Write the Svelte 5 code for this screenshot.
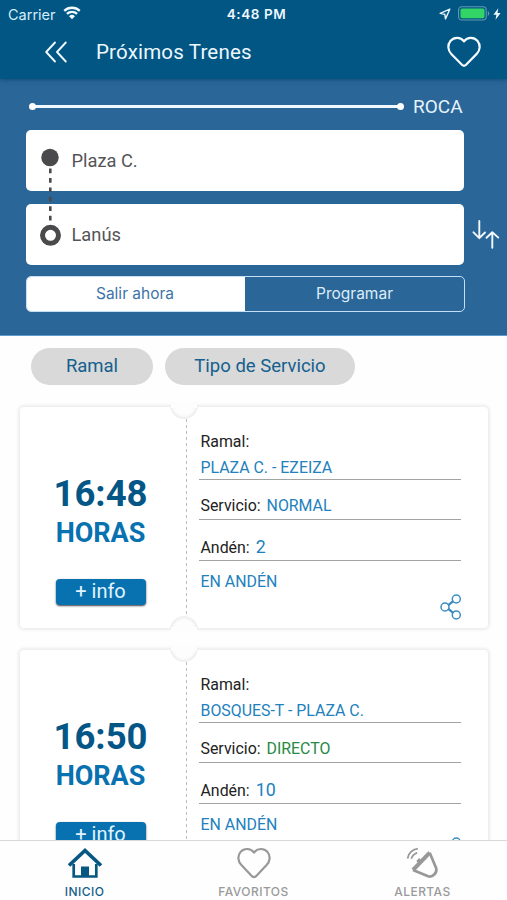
<script>
  const trains = [
    { time: '16:48', branch: 'PLAZA C. - EZEIZA', service: 'NORMAL', platform: '2', status: 'EN ANDÉN' },
    { time: '16:50', branch: 'BOSQUES-T - PLAZA C.', service: 'DIRECTO', platform: '10', status: 'EN ANDÉN' }
  ];
</script>

<div class="screen">
  <header>
    <div class="status">
      <div class="carrier">
        <span>Carrier</span>
        <svg width="18" height="14" viewBox="0 0 18 14" fill="none" stroke="#f0faff" stroke-width="2.3">
          <path d="M1.2 4.9a11.2 11.2 0 0 1 15.600 0M3.900 7.900a7.200 7.200 0 0 1 10.200 0" />
          <path d="M6 10.200a4.300 4.300 0 0 1 6 0L9 13.200z" fill="#f0faff" stroke="none" />
        </svg>
      </div>
      <div class="clock">4:48 PM</div>
      <div class="power">
        <svg width="12" height="12" viewBox="0 0 12 12" fill="none" stroke="#e5f5fc" stroke-width="1.4" stroke-linejoin="round"><path d="M10.8 1.2 1.2 5.4l4.6.9.7 4.6z" /></svg>
        <svg width="32" height="15" viewBox="0 0 32 15">
          <rect x=".6" y=".8" width="27.6" height="13.2" rx="3.2" fill="none" stroke="#5f9bb0" stroke-width="1.1" />
          <rect x="2.5" y="2.6" width="24" height="9.6" rx="1.6" fill="#32d565" />
          <path d="M29.8 5v5q1.5-.7 1.5-2.5T29.8 5z" fill="#5f9bb0" />
        </svg>
        <svg width="8" height="12" viewBox="0 0 8 12" fill="#effaff"><path d="M5.300.300.400 6.700h3L2.500 11.700 7.600 5H4.500z" /></svg>
      </div>
    </div>
    <div class="nav">
      <svg width="24" height="24" viewBox="0 0 24 24" fill="none" stroke="#edf8ff" stroke-width="1.9" stroke-linecap="round" stroke-linejoin="round"><path d="M11 2.500 2.200 12l8.800 9.500M21.800 2.500 13 12l8.800 9.500" /></svg>
      <h1>Próximos Trenes</h1>
      <svg class="fav" width="36" height="32" viewBox="0 0 36 32" fill="none" stroke="#f5fbff" stroke-width="2.2" stroke-linejoin="round"><path d="M18 5.300C21.500.6 28 .8 31.400 4.800c3.400 4 2.800 9.600-.7 13.100L19.800 29q-1.800 1.500-3.600 0L5.300 17.900C1.800 14.400 1.200 8.800 4.600 4.800 8 .8 14.500.6 18 5.300z" /></svg>
    </div>
  </header>

  <section class="search">
    <div class="line-row">
      <div class="line"></div>
      <span>ROCA</span>
    </div>
    <div class="form">
      <div class="fields">
        <div class="field">Plaza C.</div>
        <div class="field">Lanús</div>
        <svg class="rail" width="24" height="104" viewBox="0 0 24 104">
          <circle cx="12" cy="12.500" r="8.700" fill="#4a4a4c" />
          <path d="M12.300 23.500V76" stroke="#4a4a4c" stroke-width="2.600" stroke-dasharray="4.700 4.750" />
          <circle cx="12.500" cy="90.300" r="8" fill="#fff" stroke="#4a4a4c" stroke-width="5" />
        </svg>
      </div>
      <svg class="swap" width="30" height="32" viewBox="0 0 30 32" fill="none" stroke="#f1f9ff" stroke-width="1.900" stroke-linecap="round" stroke-linejoin="round"><path d="M8.300 2v17M2.500 13.300l5.800 5.900 5.700-5.700M21.300 28.700V13.500M15.500 18.800l5.800-5.600 6 5.400" /></svg>
    </div>
    <div class="segment">
      <div class="on">Salir ahora</div>
      <div class="off">Programar</div>
    </div>
  </section>

  <div class="chips">
    <div class="chip ramal">Ramal</div>
    <div class="chip tipo">Tipo de Servicio</div>
  </div>

  <main>
    {#each trains as train}
      <article>
        <i class="notch top"></i>
        <i class="notch bottom"></i>
        <div class="when">
          <div class="time">{train.time}</div>
          <div class="hours">HORAS</div>
          <div class="info">+ info</div>
        </div>
        <div class="details">
          <div class="row branch"><span class="label">Ramal:</span><span class="value">{train.branch}</span></div>
          <div class="row service"><span class="label">Servicio:</span><span class="value" class:direct={train.service === 'DIRECTO'}>{train.service}</span></div>
          <div class="row platform"><span class="label">Andén:</span><span class="value">{train.platform}</span></div>
          <div class="state">{train.status}</div>
          <svg class="share" width="22" height="26" viewBox="0 0 22 26" fill="none" stroke="#3b8dc2" stroke-width="1.500">
            <path d="m8 11.300 5.500-4.500M8 14.700l5.500 4.500" stroke-width="2.300" />
            <circle cx="5" cy="13" r="4" /><circle cx="16.300" cy="5" r="4" /><circle cx="16.300" cy="21" r="4" />
          </svg>
        </div>
      </article>
    {/each}
  </main>

  <nav class="tabs">
    <div class="tab active">
      <svg width="36" height="32" viewBox="0 0 36 32"><path d="M6.700 17v12.500h22.600V17" fill="none" stroke="#065782" stroke-width="2.700" /><path d="m2 18.500 16-15 16 15" fill="none" stroke="#065782" stroke-width="3.700" /><path d="M14 19.500h8V30h-8z" fill="#065782" /></svg>
      <span>INICIO</span>
    </div>
    <div class="tab favs">
      <svg width="36" height="32" viewBox="0 0 36 32" fill="none" stroke="#989898" stroke-width="2.200" stroke-linejoin="round"><path d="M18 5.500C21.500.9 28 1 31.400 4.900c3.400 4 2.700 9.600-.8 13.100L19.800 29.400q-1.800 1.500-3.600 0L5.400 18C1.900 14.500 1.200 8.900 4.600 4.900 8 1 14.500.9 18 5.500z" /></svg>
      <span>FAVORITOS</span>
    </div>
    <div class="tab alerts">
      <svg width="36" height="32" viewBox="0 0 36 32" fill="none" stroke="#989898" stroke-linejoin="round">
        <path d="M2.500 11.500C3.500 6.500 7.500 2.600 12.800 1.700M6.300 11.800c.8-2.900 3-5 5.900-5.900" stroke-width="1.700" />
        <path d="m24.700 5.700 6.600 15.800c.8 4.600-3.500 9-8.200 7.800L8 23" stroke-width="2.700" />
        <path d="M24.700 5.700 8 23" stroke-width="4" />
        <path d="m12.700 12.500 3 3" stroke-width="4" />
      </svg>
      <span>ALERTAS</span>
    </div>
  </nav>
</div>

<style>
  :global(body) { margin: 0; overflow: hidden; }
  .screen { position: relative; width: 507px; height: 900px; overflow: hidden; display: flex; flex-direction: column; background: #fefefe; font-family: Roboto, sans-serif; }
  svg { display: block; flex: none; }
  header { flex: none; height: 79px; background: #015683; box-shadow: 0 1px 4px #053b6299; z-index: 1; color: #edf8ff; }
  .status { height: 27px; display: flex; align-items: center; font: 15px/27px Inter, sans-serif; }
  .carrier { flex: 1; display: flex; align-items: center; gap: 7px; padding-left: 8px; font-size: 14.500px; color: #d4edfa; }
  .carrier span { padding-top: 1px; }
  .carrier svg { margin-top: -1px; }
  .clock { font-size: 13.500px; font-weight: 600; letter-spacing: .600px; padding-top: 1px; padding-left: 4px; }
  .power { flex: 1; display: flex; align-items: center; justify-content: flex-end; padding-right: 6px; }
  .power svg + svg { margin-left: 7px; }
  .power svg:last-child { margin-left: 3px; }
  .nav { height: 50px; display: flex; align-items: center; padding: 0 25px 0 44px; }
  h1 { margin: 0 0 0 28px; font-size: 20.500px; font-weight: 400; letter-spacing: .170px; line-height: 50px; flex: 1; }

  .search { flex: none; box-sizing: border-box; height: 257px; padding: 3px 0 0 26px; background: #2a6698; border-bottom: 1px solid #5e9acb; }
  .line-row { height: 48px; display: flex; align-items: center; gap: 12px; padding-left: 6px; color: #e5f3fc; font-size: 19px; }
  .line { position: relative; width: 369px; height: 3px; background: #f2faff; }
  .line::before, .line::after { content: ''; position: absolute; top: -2px; width: 7px; height: 7px; border-radius: 50%; background: #fff; left: -3px; }
  .line::after { left: auto; right: -3px; }
  .form { display: flex; align-items: flex-end; gap: 7px; }
  .fields { position: relative; width: 438px; display: flex; flex-direction: column; gap: 12.500px; }
  .field { height: 61px; border-radius: 5px; background: #fff; color: #555557; font-size: 18.300px; line-height: 61px; padding-left: 45.500px; }
  .rail { position: absolute; left: 12px; top: 15px; }
  .swap { margin-bottom: 14px; }
  .segment { box-sizing: border-box; width: 439px; height: 36px; margin-top: 11.500px; display: flex; border: 1.500px solid #c3e0f6; border-radius: 5px; font: 15.500px/34px Inter, sans-serif; text-align: center; overflow: hidden; }
  .on { box-sizing: border-box; width: 218px; padding-right: 2px; background: #fff; color: #3c74a7; }
  .off { flex: 1; color: #dcedf8; }

  .chips { flex: none; display: flex; gap: 12px; padding: 12px 0 0 31px; }
  .chip { height: 36.500px; border-radius: 19px; background: #d9d9d9; color: #14608e; font-size: 18.500px; line-height: 37px; text-align: center; }
  .ramal { width: 122px; }
  .tipo { width: 190px; }

  main { flex: none; display: flex; flex-direction: column; gap: 22px; padding: 22.500px 19px 0 20px; }
  article { position: relative; height: 221px; display: flex; border-radius: 4px; background: #fff; box-shadow: 0 0 3px 2px #ededed; }
  .notch { position: absolute; left: 150px; width: 28px; height: 14px; background: #fdfdfd; box-sizing: border-box; border: 2px solid #f0f0f0; box-shadow: inset 0 0 3px #ededed; }
  .top { top: -2px; border-top: 0; border-radius: 0 0 14px 14px; }
  .bottom { bottom: -2px; border-bottom: 0; border-radius: 14px 14px 0 0; }
  .top::before, .bottom::before { content: ''; position: absolute; left: -1px; width: 26px; height: 6px; background: #fdfdfd; top: -3px; }
  .bottom::before { top: auto; bottom: -3px; }
  .when { box-sizing: border-box; width: 167px; padding: 66px 6px 0 0; display: flex; flex-direction: column; align-items: center; background: repeating-linear-gradient(#bdbdbd 0 3px, transparent 3px 6px) right 0 / 1.500px 100% no-repeat; }
  .time { font-size: 36.500px; font-weight: 700; line-height: 42px; color: #035685; }
  .hours { font-size: 27px; font-weight: 700; line-height: 37px; color: #0871b0; }
  .info { width: 90px; height: 26px; margin-top: 27px; border-radius: 4px; background: #0871b0; color: #e1f4ff; font-size: 20px; line-height: 25px; text-align: center; box-shadow: 0 1px 2px #444; }
  .details { width: 262px; margin-left: 12px; padding-top: 25px; display: flex; flex-direction: column; font-size: 15.900px; line-height: 20px; }
  .row { display: flex; box-sizing: border-box; border-bottom: 1.500px solid #a3a3a3; padding-left: 1.500px; }
  .label { color: #222; }
  .value { color: #2281bd; }
  .direct { color: #278a45; }
  .branch { height: 48px; flex-direction: column; gap: 6px; }
  .service { height: 40px; padding-top: 16px; gap: 6px; }
  .platform { height: 41px; padding-top: 18px; gap: 6px; }
  .platform .value { font-size: 17.800px; margin-top: -1px; }
  .state { color: #2281bd; padding: 11px 0 0 1.500px; }
  .share { align-self: flex-end; margin-top: 2px; margin-right: -1px; }

  .tabs { position: absolute; left: 0; right: 0; bottom: 0; height: 59px; border-top: 1px solid #d9d9d9; background: #fefefe; display: flex; }
  .tab { flex: 1; display: flex; flex-direction: column; align-items: center; padding-top: 6px; color: #9a9a9a; font: 500 12px/16px Inter, sans-serif; letter-spacing: .450px; }
  .tab span { margin-top: 5px; }
  .active { color: #165f8b; }
</style>
